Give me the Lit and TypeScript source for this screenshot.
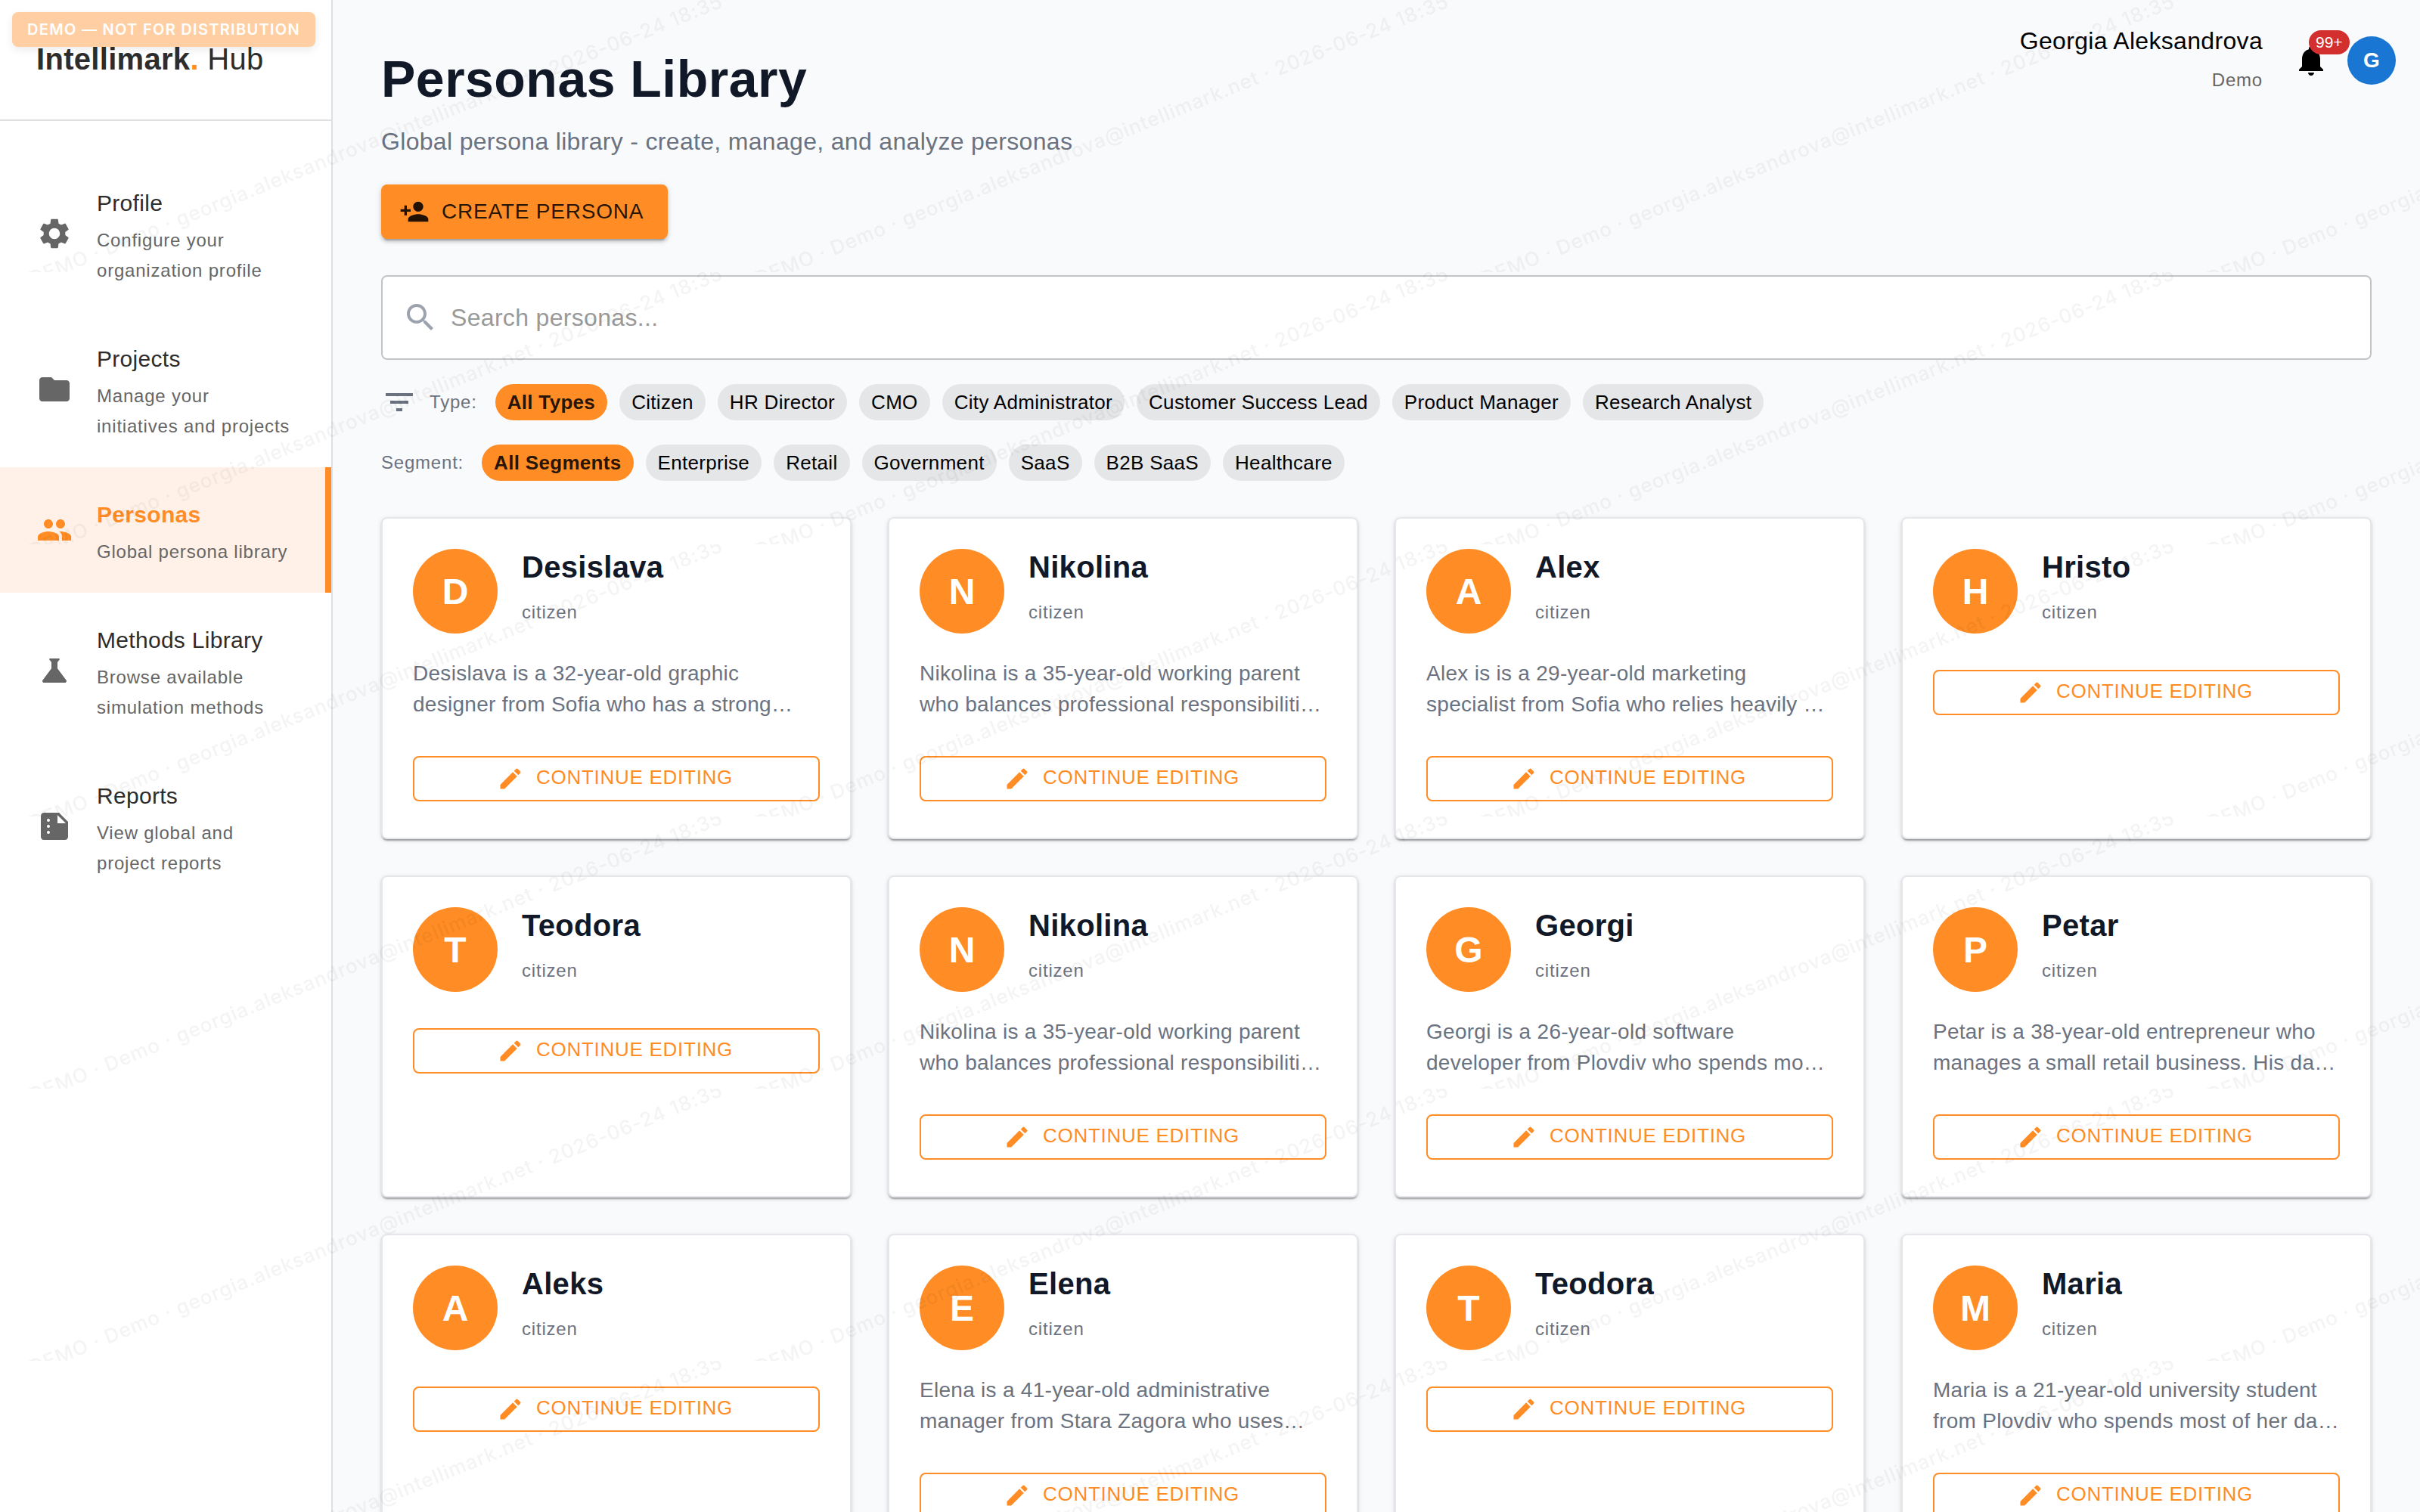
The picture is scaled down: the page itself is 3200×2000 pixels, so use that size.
import { LitElement, html, css, svg, nothing } from "lit";
import { customElement, property, state } from "lit/decorators.js";
import { classMap } from "lit/directives/class-map.js";

const ICONS = {
  settings:
    "M19.14 12.94c.04-.3.06-.61.06-.94 0-.32-.02-.64-.07-.94l2.03-1.58c.18-.14.23-.41.12-.61l-1.92-3.32c-.12-.22-.37-.29-.59-.22l-2.39.96c-.5-.38-1.03-.7-1.62-.94l-.36-2.54c-.04-.24-.24-.41-.48-.41h-3.84c-.24 0-.43.17-.47.41l-.36 2.54c-.59.24-1.13.57-1.62.94l-2.39-.96c-.22-.08-.47 0-.59.22L2.74 8.87c-.12.21-.08.47.12.61l2.03 1.58c-.05.3-.09.63-.09.94s.02.64.07.94l-2.03 1.58c-.18.14-.23.41-.12.61l1.92 3.32c.12.22.37.29.59.22l2.39-.96c.5.38 1.03.7 1.62.94l.36 2.54c.05.24.24.41.48.41h3.84c.24 0 .44-.17.47-.41l.36-2.54c.59-.24 1.13-.56 1.62-.94l2.39.96c.22.08.47 0 .59-.22l1.92-3.32c.12-.22.07-.47-.12-.61zM12 15.6c-1.98 0-3.6-1.62-3.6-3.6s1.62-3.6 3.6-3.6 3.6 1.62 3.6 3.6-1.62 3.6-3.6 3.6",
  folder: "M10 4H4c-1.1 0-1.99.9-1.99 2L2 18c0 1.1.9 2 2 2h16c1.1 0 2-.9 2-2V8c0-1.1-.9-2-2-2h-8z",
  people:
    "M16 11c1.66 0 2.99-1.34 2.99-3S17.66 5 16 5s-3 1.34-3 3 1.34 3 3 3m-8 0c1.66 0 2.99-1.34 2.99-3S9.66 5 8 5 5 6.34 5 8s1.34 3 3 3m0 2c-2.33 0-7 1.17-7 3.5V19h14v-2.5c0-2.33-4.67-3.5-7-3.5m8 0c-.29 0-.62.02-.97.05 1.16.84 1.97 1.97 1.97 3.45V19h6v-2.5c0-2.33-4.67-3.5-7-3.5",
  science:
    "M19.8 18.4 14 10.67V6.5l1.35-1.69c.26-.33.03-.81-.39-.81H9.04c-.42 0-.65.48-.39.81L10 6.5v4.17L4.2 18.4c-.49.66-.02 1.6.8 1.6h14c.82 0 1.29-.94.8-1.6",
  summarize:
    "M15 3H5c-1.1 0-1.99.9-1.99 2L3 19c0 1.1.89 2 1.99 2H19c1.1 0 2-.9 2-2V9zM8 17c-.55 0-1-.45-1-1s.45-1 1-1 1 .45 1 1-.45 1-1 1m0-4c-.55 0-1-.45-1-1s.45-1 1-1 1 .45 1 1-.45 1-1 1m0-4c-.55 0-1-.45-1-1s.45-1 1-1 1 .45 1 1-.45 1-1 1m6 1V4.5l5.5 5.5z",
  personAdd:
    "M15 12c2.21 0 4-1.79 4-4s-1.79-4-4-4-4 1.79-4 4 1.79 4 4 4m-9-2V7H4v3H1v2h3v3h2v-3h3v-2zm9 4c-2.67 0-8 1.34-8 4v2h16v-2c0-2.66-5.33-4-8-4",
  search:
    "M15.5 14h-.79l-.28-.27C15.41 12.59 16 11.11 16 9.5 16 5.91 13.09 3 9.5 3S3 5.91 3 9.5 5.91 16 9.5 16c1.61 0 3.09-.59 4.23-1.57l.27.28v.79l5 4.99L20.49 19zm-6 0C7.01 14 5 11.99 5 9.5S7.01 5 9.5 5 14 7.01 14 9.5 11.99 14 9.5 14",
  filter: "M10 18h4v-2h-4zM3 6v2h18V6zm3 7h12v-2H6z",
  edit: "M3 17.25V21h3.75L17.81 9.94l-3.75-3.75zM20.71 7.04c.39-.39.39-1.02 0-1.41l-2.34-2.34a.996.996 0 0 0-1.41 0l-1.83 1.83 3.75 3.75z",
  bell: "M12 22c1.1 0 2-.9 2-2h-4c0 1.1.89 2 2 2m6-6v-5c0-3.07-1.64-5.64-4.5-6.32V4c0-.83-.67-1.5-1.5-1.5s-1.5.67-1.5 1.5v.68C7.63 5.36 6 7.92 6 11v5l-2 2v1h16v-1z",
};
type IconName = keyof typeof ICONS;

const icon = (name: IconName) =>
  html`<svg class="icon" viewBox="0 0 24 24" aria-hidden="true">${svg`<path d=${ICONS[name]}></path>`}</svg>`;

const NAV: { label: string; text: string; icon: IconName }[] = [
  { label: "Profile", text: "Configure your organization profile", icon: "settings" },
  { label: "Projects", text: "Manage your initiatives and projects", icon: "folder" },
  { label: "Personas", text: "Global persona library", icon: "people" },
  { label: "Methods Library", text: "Browse available simulation methods", icon: "science" },
  { label: "Reports", text: "View global and project reports", icon: "summarize" },
];

const TYPES = [
  "All Types", "Citizen", "HR Director", "CMO", "City Administrator",
  "Customer Success Lead", "Product Manager", "Research Analyst",
];
const SEGMENTS = ["All Segments", "Enterprise", "Retail", "Government", "SaaS", "B2B SaaS", "Healthcare"];

interface Persona {
  name: string;
  summary?: string;
}
const NIKOLINA = "Nikolina is a 35-year-old working parent who balances professional responsibiliti…";
const PERSONAS: Persona[] = [
  { name: "Desislava", summary: "Desislava is a 32-year-old graphic designer from Sofia who has a strong…" },
  { name: "Nikolina", summary: NIKOLINA },
  { name: "Alex", summary: "Alex is is a 29-year-old marketing specialist from Sofia who relies heavily …" },
  { name: "Hristo" },
  { name: "Teodora" },
  { name: "Nikolina", summary: NIKOLINA },
  { name: "Georgi", summary: "Georgi is a 26-year-old software developer from Plovdiv who spends mo…" },
  { name: "Petar", summary: "Petar is a 38-year-old entrepreneur who manages a small retail business. His da…" },
  { name: "Aleks" },
  { name: "Elena", summary: "Elena is a 41-year-old administrative manager from Stara Zagora who uses…" },
  { name: "Teodora" },
  { name: "Maria", summary: "Maria is a 21-year-old university student from Plovdiv who spends most of her da…" },
];

const base = css`
  * {
    box-sizing: border-box;
  }
  h1, h2, p, ul {
    margin: 0;
    padding: 0;
  }
  button, input {
    font: inherit;
    color: inherit;
    margin: 0;
  }
  button {
    cursor: pointer;
  }
  .icon {
    display: block;
    flex: none;
    width: 48px;
    height: 48px;
    fill: currentColor;
  }
`;

@customElement("persona-card")
export class PersonaCard extends LitElement {
  @property({ attribute: false }) persona!: Persona;

  static styles = [
    base,
    css`
      :host {
        display: block;
        min-width: 0;
        padding: 40px 40px 48px;
        background: #fff;
        border: 2px solid #e5e7eb;
        border-radius: 8px;
        box-shadow: 0 4px 2px -2px rgba(0, 0, 0, 0.2), 0 2px 2px rgba(0, 0, 0, 0.14),
          0 2px 6px rgba(0, 0, 0, 0.12);
      }
      .head {
        display: flex;
        gap: 32px;
        margin-bottom: 32px;
      }
      .avatar {
        display: flex;
        flex: none;
        align-items: center;
        justify-content: center;
        width: 112px;
        height: 112px;
        border-radius: 50%;
        background: #ff8c24;
        color: #fff;
        font-size: 48px;
        font-weight: 700;
      }
      .name {
        color: #111827;
        font-size: 40px;
        line-height: 48px;
        font-weight: 700;
        letter-spacing: 0.0075em;
      }
      .role {
        margin-top: 16px;
        color: #6b7280;
        font-size: 24px;
        line-height: 40px;
        letter-spacing: 0.033em;
      }
      .summary {
        color: #6b7280;
        font-size: 28px;
        line-height: 41px;
        letter-spacing: 0.01em;
      }
      .edit {
        display: flex;
        align-items: center;
        justify-content: center;
        gap: 16px;
        width: 100%;
        height: 60px;
        margin-top: 48px;
        padding: 0 20px 0 16px;
        border: 2px solid #ff8c24;
        border-radius: 8px;
        background: none;
        color: #ff8c24;
        font-size: 26px;
        letter-spacing: 0.028em;
        text-transform: uppercase;
      }
      .edit-label {
        padding-bottom: 4px;
      }
      .edit .icon {
        width: 36px;
        height: 36px;
      }
    `,
  ];

  render() {
    const { name, summary } = this.persona;
    return html`
      <div class="head">
        <div class="avatar" aria-hidden="true">${name[0]}</div>
        <div>
          <h2 class="name">${name}</h2>
          <p class="role">citizen</p>
        </div>
      </div>
      ${summary ? html`<p class="summary">${summary}</p>` : nothing}
      <button class="edit" type="button">
        ${icon("edit")}<span class="edit-label">Continue editing</span>
      </button>
    `;
  }
}

@customElement("app-root")
export class AppRoot extends LitElement {
  @state() private type = TYPES[0];
  @state() private segment = SEGMENTS[0];

  static styles = [
    base,
    css`
      :host {
        position: relative;
        display: flex;
        height: 100vh;
        overflow: hidden;
        background: #f9fafc;
        color: #000;
        font-family: "Liberation Sans", Arial, Helvetica, sans-serif;
      }
      .sidebar {
        flex: none;
        width: 440px;
        background: #fff;
        border-right: 2px solid #e0e0e0;
      }
      .logo {
        display: flex;
        align-items: center;
        height: 160px;
        padding: 0 48px 2px;
        border-bottom: 2px solid #e0e0e0;
        color: #2d2d2d;
        font-size: 40px;
        line-height: 48px;
        letter-spacing: 0.0075em;
        white-space: pre;
      }
      .logo .dot {
        color: #ff8c24;
      }
      .nav {
        padding-top: 46px;
        list-style: none;
      }
      .nav-link {
        display: flex;
        align-items: center;
        gap: 32px;
        padding: 34px 52px 34px 48px;
        color: #666;
        text-decoration: none;
      }
      .nav-title {
        display: block;
        margin: 6px 0;
        color: #2d2d2d;
        font-size: 30px;
        line-height: 46px;
        letter-spacing: 0.01em;
      }
      .nav-text {
        display: block;
        color: #666;
        font-size: 24px;
        line-height: 40px;
        letter-spacing: 0.033em;
      }
      .nav-link.active {
        padding-right: 44px;
        border-right: 8px solid #ff8c24;
        background: #fff1e8;
        color: #ff8c24;
      }
      .active .nav-title {
        color: #ff8c24;
        font-weight: 700;
      }
      .main {
        flex: 1;
        min-width: 0;
        padding: 62px 64px 64px;
        overflow-y: auto;
        scrollbar-width: none;
      }
      .head {
        display: flex;
        justify-content: space-between;
        align-items: flex-start;
      }
      .title {
        color: #111827;
        font-size: 68px;
        line-height: 84px;
        font-weight: 700;
        letter-spacing: 0.007em;
      }
      .subtitle {
        margin: 17px 0 33px;
        color: #6b7280;
        font-size: 32px;
        line-height: 48px;
        letter-spacing: 0.01em;
      }
      .create {
        display: flex;
        align-items: center;
        gap: 16px;
        height: 72px;
        padding: 0 32px 0 24px;
        border: 0;
        border-radius: 8px;
        background: #ff8c24;
        box-shadow: 0 6px 2px -4px rgba(0, 0, 0, 0.2), 0 4px 4px rgba(0, 0, 0, 0.14),
          0 2px 10px rgba(0, 0, 0, 0.12);
        color: rgba(0, 0, 0, 0.87);
        font-size: 28px;
        letter-spacing: 0.028em;
        text-transform: uppercase;
      }
      .create .icon {
        width: 40px;
        height: 40px;
      }
      .user {
        display: flex;
        align-items: center;
        margin: -32px -32px 0 0;
      }
      .user-text {
        padding-bottom: 4px;
        text-align: right;
      }
      .user-name {
        font-size: 32px;
        line-height: 48px;
        letter-spacing: 0.01em;
      }
      .user-org {
        margin-top: 8px;
        color: #666;
        font-size: 24px;
        line-height: 40px;
        letter-spacing: 0.033em;
      }
      .bell {
        position: relative;
        margin: 0 24px 0 40px;
        padding: 0;
        border: 0;
        background: none;
      }
      .count {
        position: absolute;
        left: 21px;
        bottom: 32px;
        padding: 0 9px;
        border-radius: 16px;
        background: #d32f2f;
        color: #fff;
        font-size: 21px;
        line-height: 32px;
      }
      .me {
        width: 64px;
        height: 64px;
        padding: 0;
        border: 0;
        border-radius: 50%;
        background: #1976d2;
        color: #fff;
        font-size: 28px;
        font-weight: 700;
      }
      .search {
        display: flex;
        align-items: center;
        gap: 16px;
        height: 112px;
        margin: 48px 0 32px;
        padding: 0 26px;
        border: 2px solid #c4c4c4;
        border-radius: 8px;
        background: #fff;
        color: #9ca3af;
      }
      .search-input {
        flex: 1;
        min-width: 0;
        padding: 0;
        border: 0;
        outline: 0;
        background: none;
        color: #000;
        font-size: 32px;
        line-height: 48px;
        letter-spacing: 0.01em;
      }
      .search-input::placeholder {
        color: #999;
        opacity: 1;
      }
      .filters {
        display: flex;
        flex-wrap: wrap;
        align-items: center;
        gap: 16px;
        margin-bottom: 32px;
        color: #6b7280;
      }
      .filter-label {
        margin-right: 8px;
        font-size: 24px;
        letter-spacing: 0.033em;
      }
      .chip {
        height: 48px;
        padding: 0 16px;
        border: 0;
        border-radius: 24px;
        background: #e5e6e8;
        color: #000;
        font-size: 26px;
        line-height: 48px;
        letter-spacing: 0.012em;
      }
      .chip.on {
        background: #ff8c24;
        color: rgba(0, 0, 0, 0.87);
        font-weight: 700;
      }
      .grid {
        display: grid;
        grid-template-columns: repeat(4, 1fr);
        gap: 48px;
        margin-top: 48px;
      }
      .watermark {
        position: absolute;
        inset: 0;
        width: 100%;
        height: 100%;
        pointer-events: none;
      }
      .stamp {
        fill: #000;
        fill-opacity: 0.045;
        font-family: Inter, sans-serif;
        font-size: 26px;
        font-weight: 500;
        letter-spacing: 0.04em;
      }
      .ribbon {
        position: absolute;
        top: 16px;
        left: 16px;
        padding: 0 20px;
        border-radius: 8px;
        background: #ffcfa3;
        box-shadow: 0 4px 12px rgba(0, 0, 0, 0.08);
        color: #fff;
        font-family: Inter, sans-serif;
        font-size: 20px;
        line-height: 46px;
        font-weight: 600;
        letter-spacing: 0.065em;
        text-transform: uppercase;
      }
    `,
  ];

  private chips(items: string[], current: string, pick: (v: string) => void) {
    return items.map(
      (item) => html`<button
        type="button"
        class=${classMap({ chip: true, on: item === current })}
        aria-pressed=${item === current ? "true" : "false"}
        @click=${() => pick(item)}
      >${item}</button>`,
    );
  }

  render() {
    return html`
      <aside class="sidebar">
        <div class="logo"><b>Intellimark</b><b class="dot">.</b><span> Hub</span></div>
        <nav>
          <ul class="nav">
            ${NAV.map(
              (item) => html`<li>
                <a class=${classMap({ "nav-link": true, active: item.label === "Personas" })} href="#">
                  ${icon(item.icon)}
                  <span>
                    <span class="nav-title">${item.label}</span>
                    <span class="nav-text">${item.text}</span>
                  </span>
                </a>
              </li>`,
            )}
          </ul>
        </nav>
      </aside>

      <main class="main">
        <header class="head">
          <div>
            <h1 class="title">Personas Library</h1>
            <p class="subtitle">Global persona library - create, manage, and analyze personas</p>
            <button class="create" type="button">${icon("personAdd")}<span>Create persona</span></button>
          </div>
          <div class="user">
            <div class="user-text">
              <p class="user-name">Georgia Aleksandrova</p>
              <p class="user-org">Demo</p>
            </div>
            <button class="bell" type="button" aria-label="Notifications">
              ${icon("bell")}<span class="count">99+</span>
            </button>
            <button class="me" type="button" aria-label="Account">G</button>
          </div>
        </header>

        <label class="search">
          ${icon("search")}
          <input class="search-input" type="text" placeholder="Search personas..." aria-label="Search personas" />
        </label>

        <div class="filters" role="group" aria-label="Type">
          ${icon("filter")}
          <span class="filter-label">Type:</span>
          ${this.chips(TYPES, this.type, (v) => (this.type = v))}
        </div>
        <div class="filters" role="group" aria-label="Segment">
          <span class="filter-label">Segment:</span>
          ${this.chips(SEGMENTS, this.segment, (v) => (this.segment = v))}
        </div>

        <section class="grid">
          ${PERSONAS.map((p) => html`<persona-card .persona=${p}></persona-card>`)}
        </section>
      </main>

      <svg class="watermark" aria-hidden="true">
        <defs>
          <pattern id="stamp" width="960" height="360" patternUnits="userSpaceOnUse">
            <text class="stamp" x="494" y="200" text-anchor="middle" transform="rotate(-22 480 180)">
              DEMO · Demo · georgia.aleksandrova@intellimark.net · 2026-06-24 18:35
            </text>
          </pattern>
        </defs>
        <rect width="100%" height="100%" fill="url(#stamp)"></rect>
      </svg>
      <div class="ribbon">Demo — not for distribution</div>
    `;
  }
}
